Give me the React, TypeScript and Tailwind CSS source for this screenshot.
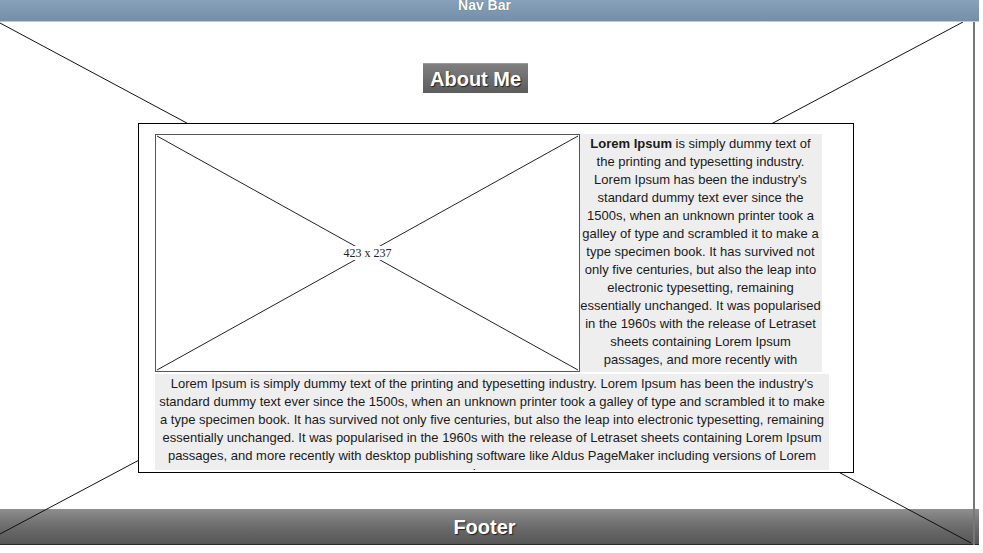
const lorem =
  " is simply dummy text of the printing and typesetting industry. Lorem Ipsum has been the industry's standard dummy text ever since the 1500s, when an unknown printer took a galley of type and scrambled it to make a type specimen book. It has survived not only five centuries, but also the leap into electronic typesetting, remaining essentially unchanged. It was popularised in the 1960s with the release of Letraset sheets containing Lorem Ipsum passages, and more recently with desktop publishing software like Aldus PageMaker including versions of Lorem Ipsum.";

const Placeholder = () => (
  <div className="relative w-[425px] h-[238px] border border-[#555] bg-white shrink-0">
    <svg className="absolute inset-0" width="423" height="236" viewBox="0 0 423 236">
      <line x1="1" y1="1" x2="422" y2="235" stroke="#222" strokeWidth="1" />
      <line x1="422" y1="1" x2="1" y2="235" stroke="#222" strokeWidth="1" />
    </svg>
    <div className="absolute inset-0 flex items-center justify-center">
      <span className="bg-white px-[2px] text-[12px] leading-[14px] text-[#222] font-['Liberation_Serif',serif]">
        423 x 237
      </span>
    </div>
  </div>
);

const App = () => {
  return (
    <div className="w-[983px] h-[553px] bg-white overflow-hidden font-['Liberation_Sans',Arial,sans-serif]">
      <nav className="w-[979px] h-[22px] bg-gradient-to-b from-[#88a1ba] to-[#758fa9] border-b border-[#c8c8c8] pr-[10px] text-center overflow-hidden">
        <span className="block -mt-[2px] text-[14px] leading-[14px] font-bold text-white [text-shadow:0_0_1px_#4a5a6a]">
          Nav Bar
        </span>
      </nav>

      <section className="relative w-[979px] h-[523px] flex flex-col">
        <div className="relative z-20 ml-[423px] mt-[41px] self-start h-[30px] px-[7px] flex items-center bg-gradient-to-b from-[#808080] to-[#5c5c5c] border-t border-[#9a9a9a]">
          <h2 className="text-[20px] leading-none font-bold text-white [text-shadow:1px_1px_1px_#222]">About Me</h2>
        </div>

        <div className="relative z-20 ml-[138px] mt-[30px] w-[716px] h-[350px] border border-black bg-white pl-[16px] pt-[10px]">
          <div className="flex">
            <Placeholder />
            <p className="w-[242px] h-[238px] overflow-hidden bg-[#eeeeee] pt-[1px] pr-[1px] text-center text-[13px] leading-[18px] text-[#1a1a1a]">
              <b>Lorem Ipsum</b>
              {lorem}
            </p>
          </div>
          <p className="mt-[2px] w-[674px] h-[96px] overflow-hidden bg-[#eeeeee] pt-[1px] text-center text-[13px] leading-[18px] text-[#1a1a1a]">
            Lorem Ipsum{lorem}
          </p>
        </div>

        <footer className="mt-auto h-[36px] w-[979px] pr-[10px] flex items-center justify-center bg-gradient-to-b from-[#8e8e8e] via-[#6c6c6c] to-[#565656] border-b border-[#2a2a2a]">
          <span className="text-[20px] leading-none font-bold text-white [text-shadow:1px_1px_1px_#222]">Footer</span>
        </footer>

        <svg className="absolute inset-0 z-10 pointer-events-none" width="979" height="523" viewBox="0 0 979 523">
          <line x1="0" y1="1" x2="971" y2="521" stroke="#111" strokeWidth="1" />
          <line x1="963" y1="0" x2="0" y2="512" stroke="#111" strokeWidth="1" />
          <line x1="974" y1="0" x2="974" y2="523" stroke="#777" strokeWidth="2" />
        </svg>
      </section>
    </div>
  );
};

export default App;
